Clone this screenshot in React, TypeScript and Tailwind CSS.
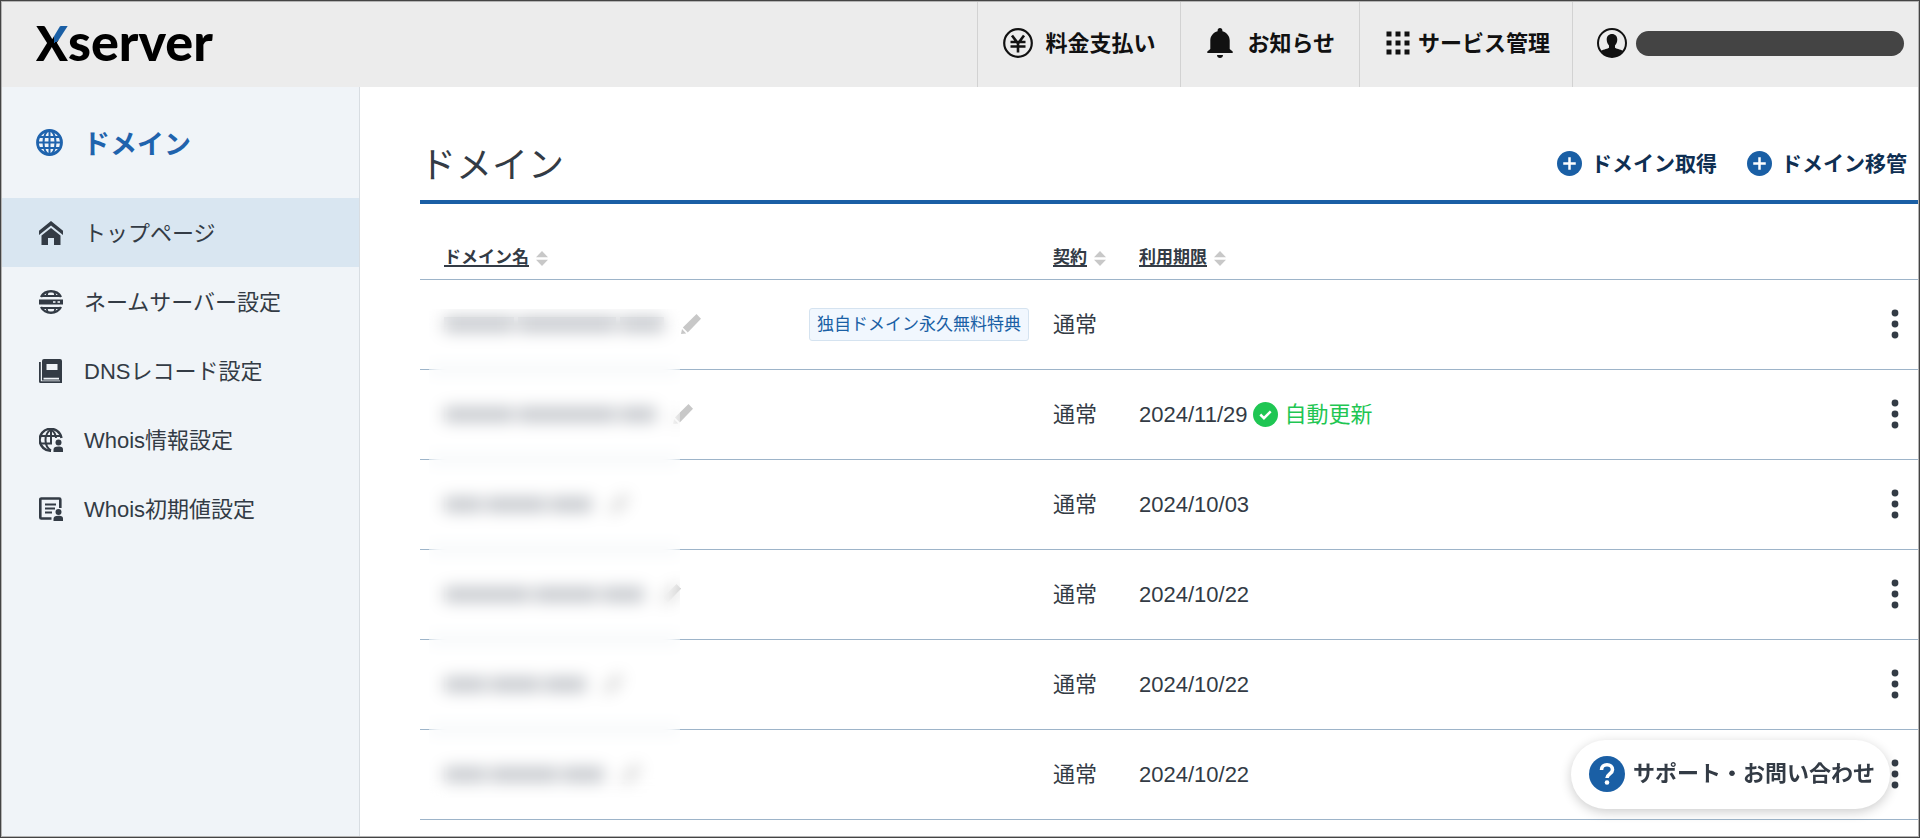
import type { ReactNode } from "react";

type Row = {
  words: string[];
  badge?: string;
  contract: string;
  expires?: string;
  autoRenew?: boolean;
};

const rows: Row[] = [
  { words: ["w-[70px]", "w-[98px]", "w-[44px]"], badge: "独自ドメイン永久無料特典", contract: "通常" },
  { words: ["w-[70px]", "w-[98px]", "w-[36px]"], contract: "通常", expires: "2024/11/29", autoRenew: true },
  { words: ["w-[38px]", "w-[60px]", "w-[42px]"], contract: "通常", expires: "2024/10/03" },
  { words: ["w-[86px]", "w-[64px]", "w-[42px]"], contract: "通常", expires: "2024/10/22" },
  { words: ["w-[42px]", "w-[50px]", "w-[42px]"], contract: "通常", expires: "2024/10/22" },
  { words: ["w-[42px]", "w-[68px]", "w-[42px]"], contract: "通常", expires: "2024/10/22" },
];

function YenIcon() {
  return (
    <svg viewBox="0 0 30 30" className="size-[30px] shrink-0" fill="none" stroke="#111" aria-hidden="true">
      <circle cx="15" cy="15" r="13.8" strokeWidth="2.2" />
      <path d="M9 7.5l6 8 6-8M15 15v9.5M7.5 14h15M7.5 18.5h15" strokeWidth="2.6" />
    </svg>
  );
}

function BellIcon() {
  return (
    <svg viewBox="0 0 30 30" className="size-[30px] shrink-0" fill="#111" aria-hidden="true">
      <path d="M15 0c1.5 0 2.4 1 2.4 2.4v.9c4.3 1.1 7.3 4.8 7.3 9.3v8.4l3 2.6V25H2.3v-1.4l3-2.6v-8.4c0-4.5 3-8.2 7.3-9.3v-.9C12.6 1 13.5 0 15 0z" />
      <path d="M12 27h6c0 1.8-1.3 3-3 3s-3-1.2-3-3z" />
    </svg>
  );
}

function GridIcon() {
  const steps = [0, 9, 18];
  return (
    <svg viewBox="0 0 24 24" className="size-[24px] shrink-0" fill="#111" aria-hidden="true">
      {steps.map((y) => steps.map((x) => <rect key={`${x}-${y}`} x={x + 0.5} y={y + 0.5} width="5" height="5" />))}
    </svg>
  );
}

function UserIcon() {
  return (
    <svg viewBox="0 0 30 30" className="size-[30px] shrink-0" aria-hidden="true">
      <circle cx="15" cy="15" r="14" fill="none" stroke="#111" strokeWidth="2" />
      <path
        fill="#111"
        d="M15 6c3.2 0 5.3 2.2 5.3 5.6 0 2.5-1 4.7-2.3 5.9v2.3c1 1 5 1.4 8 3.2A14 14 0 0 1 15 29 14 14 0 0 1 4 23c3-1.8 7-2.2 8-3.2v-2.3c-1.3-1.2-2.3-3.4-2.3-5.9C9.7 8.2 11.8 6 15 6z"
      />
    </svg>
  );
}

function GlobeIcon() {
  return (
    <svg viewBox="0 0 27 27" className="size-[27px] shrink-0" fill="none" stroke="#1f63ad" aria-hidden="true">
      <circle cx="13.5" cy="13.5" r="12" strokeWidth="2.8" />
      <ellipse cx="13.5" cy="13.5" rx="6" ry="12" strokeWidth="2" />
      <path d="M13.5 2v23M2 13.5h23M4 8h19M4 19h19" strokeWidth="2" />
    </svg>
  );
}

function HomeIcon() {
  return (
    <svg viewBox="0 0 24 24" className="size-[24px] shrink-0" fill="#333b45" aria-hidden="true">
      <path d="M12 0l12 9.800v4.200L12 4.400 0 14V9.800z" />
      <path d="M12 7l9.500 7.600V24H15v-7H9v7H2.500v-9.400z" />
    </svg>
  );
}

function NameServerIcon() {
  return (
    <svg viewBox="0 0 24 24" className="size-[24px] shrink-0" aria-hidden="true">
      <g fill="none" stroke="#333b45">
        <path d="M2 7C4 3.500 7.500 1.300 12 1.300s8 2.200 10 5.700M2 17c2 3.500 5.500 5.700 10 5.700s8-2.200 10-5.700" strokeWidth="2.400" />
        <path d="M2.500 6h19M2.500 18h19M9 1.500C8 3.500 7.700 5 7.500 7M15 1.500c1 2 1.300 3.500 1.500 5.500M9 22.500c-1-2-1.300-3.500-1.500-5.500M15 22.500c1-2 1.300-3.500 1.500-5.500" strokeWidth="1.800" />
      </g>
      <rect x="0" y="9.500" width="24" height="5" fill="#333b45" />
      <path d="M14 11h2.500v2H14zM18.500 11H21v2h-2.500z" fill="#c9ced4" />
    </svg>
  );
}

function BookIcon() {
  return (
    <svg viewBox="0 0 24 24" className="size-[24px] shrink-0" aria-hidden="true">
      <path fill="#333b45" d="M0 3h1.800v19.200H21V24H1.500A1.500 1.500 0 0 1 0 22.500z" />
      <path fill="#333b45" fillRule="evenodd" d="M5 0h16a2 2 0 0 1 2 2v22h-2v-2.500H3V2a2 2 0 0 1 2-2zm2.500 5v6h11V5zM4.500 18.800v1.600H20v-1.600z" />
    </svg>
  );
}

function WhoisIcon() {
  return (
    <svg viewBox="0 0 24 24" className="size-[24px] shrink-0" aria-hidden="true">
      <g fill="none" stroke="#333b45">
        <path d="M22.500 10A11 11 0 1 0 12 22.800" strokeWidth="2.400" />
        <path d="M12 1.500C8 4 6.500 7.500 6.500 12S8 20 12 22.500M12 1.500c3 2 4.600 5 5 8.500M2 8h20M1.500 15.500H13M12 1v14" strokeWidth="2" />
      </g>
      <circle cx="19.500" cy="14.500" r="3" fill="#333b45" />
      <path fill="#333b45" d="M14.500 24v-2.300c0-2 1.500-3.200 5-3.200s4.500 1.200 4.500 3.200V24z" />
    </svg>
  );
}

function WhoisDefaultIcon() {
  return (
    <svg viewBox="0 0 24 24" className="size-[24px] shrink-0" aria-hidden="true">
      <path d="M21.300 11V2.500a1 1 0 0 0-1-1H2.300a1 1 0 0 0-1 1v18a1 1 0 0 0 1 1H12.500" fill="none" stroke="#333b45" strokeWidth="2.600" />
      <path d="M6 7.500h11M6 11.500h10M6 15.500h7" stroke="#333b45" strokeWidth="1.800" />
      <circle cx="19.500" cy="15" r="3" fill="#333b45" />
      <path fill="#333b45" d="M14.500 24v-2.300c0-1.800 1.500-2.900 5-2.900s4.500 1.100 4.500 2.900V24z" />
    </svg>
  );
}

function PlusIcon() {
  return (
    <svg viewBox="0 0 24 24" className="size-[25px] shrink-0" aria-hidden="true">
      <circle cx="12" cy="12" r="12" fill="#1a5fa5" />
      <path d="M12 6v12M6 12h12" stroke="#fff" strokeWidth="2.4" />
    </svg>
  );
}

function PencilIcon() {
  return (
    <svg viewBox="0 0 20 20" className="size-[20px] shrink-0" fill="#c8c8c8" aria-hidden="true">
      <path d="M15.500 0L20 4.800 6.800 18.500 1.800 13.500z" />
      <path d="M1 15l4.200 4.400L0 20z" />
    </svg>
  );
}

function SortIcon() {
  return (
    <svg viewBox="0 0 12 15" className="h-[15px] w-[12px] shrink-0" fill="#c8c8c8" aria-hidden="true">
      <path d="M6 0l6 6.200H0zM6 15l6-6.200H0z" />
    </svg>
  );
}

function NavItem({ className, children }: { className: string; children: ReactNode }) {
  return (
    <a href="#" className={`flex items-center border-l border-[#d2d2d2] pb-[3px] text-[22px] font-bold whitespace-nowrap text-[#111] ${className}`}>
      {children}
    </a>
  );
}

function SortHeader({ label }: { label: string }) {
  return (
    <button type="button" className="flex items-center gap-[7px] text-[17px] leading-[24px] font-bold whitespace-nowrap">
      <span className="underline decoration-2 underline-offset-2">{label}</span>
      <SortIcon />
    </button>
  );
}

const menu = [
  { label: "トップページ", icon: <HomeIcon />, active: true },
  { label: "ネームサーバー設定", icon: <NameServerIcon />, active: false },
  { label: "DNSレコード設定", icon: <BookIcon />, active: false },
  { label: "Whois情報設定", icon: <WhoisIcon />, active: false },
  { label: "Whois初期値設定", icon: <WhoisDefaultIcon />, active: false },
];

export default function App() {
  return (
    <div className="flex min-h-screen flex-col bg-[#444] p-px font-['Liberation_Sans','Noto_Sans_CJK_JP',sans-serif] text-[#333b45]">
      <div className="flex grow flex-col border border-[#b4b4b4] bg-white">
        <header className="flex h-[85px] justify-between bg-[#ececec]">
          <a href="#" aria-label="Xserver" className="flex items-baseline pl-[34px] font-['Lato',sans-serif] leading-[78px] font-black text-black">
            <span className="bg-[conic-gradient(at_56%_50%,#1a5fa5_0_60deg,#000_60deg)] bg-clip-text text-[47px] text-transparent">X</span>
            <span className="text-[52px]">server</span>
          </a>
          <nav className="flex">
            <NavItem className="gap-3 pr-[25px] pl-[25px]">
              <YenIcon />
              料金支払い
            </NavItem>
            <NavItem className="gap-3 px-6">
              <BellIcon />
              お知らせ
            </NavItem>
            <NavItem className="gap-2 pr-[22px] pl-[26px]">
              <GridIcon />
              サービス管理
            </NavItem>
            <NavItem className="gap-[9px] pr-[14px] pl-6">
              <UserIcon />
              <span className="h-[25px] w-[268px] rounded-full bg-[#444]" />
            </NavItem>
          </nav>
        </header>

        <div className="flex grow">
          <aside className="w-[358px] shrink-0 border-r border-[#d8dde2] bg-[#f0f4f8]">
            <h2 className="flex h-[111px] items-center gap-[20px] pl-[34px] text-[27px] font-bold text-[#1f63ad]">
              <GlobeIcon />
              <span className="pt-[6px]">ドメイン</span>
            </h2>
            <nav>
              {menu.map((item) => (
                <a
                  key={item.label}
                  href="#"
                  className={`flex h-[69px] items-center gap-[21px] pt-px pl-[37px] text-[22px] ${item.active ? "bg-[#d9e6f1]" : ""}`}
                >
                  {item.icon}
                  {item.label}
                </a>
              ))}
            </nav>
          </aside>

          <main className="min-w-0 grow pl-[60px]">
            <div className="flex items-center justify-between border-b-4 border-[#1a5fa5] pt-[40px] pr-[11px]">
              <h1 className="pt-[4px] text-[36px] leading-[69px]">ドメイン</h1>
              <div className="flex gap-[30px] text-[21px] font-bold text-[#0f2f52]">
                <a href="#" className="flex items-center gap-[9px]">
                  <PlusIcon />
                  ドメイン取得
                </a>
                <a href="#" className="flex items-center gap-[9px]">
                  <PlusIcon />
                  ドメイン移管
                </a>
              </div>
            </div>

            <div className="relative">
              <table className="w-full table-fixed border-collapse text-left text-[22px]">
                <thead>
                  <tr className="h-[75px] border-b border-[#9db4c9]">
                    <th className="w-[633px] pt-[34px] pl-6">
                      <SortHeader label="ドメイン名" />
                    </th>
                    <th className="w-[86px] pt-[34px]">
                      <SortHeader label="契約" />
                    </th>
                    <th className="pt-[34px]">
                      <SortHeader label="利用期限" />
                    </th>
                    <th className="w-[48px]" aria-label="操作" />
                  </tr>
                </thead>
                <tbody>
                  {rows.map((row, i) => (
                    <tr key={i} className="h-[90px] border-b border-[#9db4c9]">
                      <td className="pr-6 pl-6">
                        <div className="flex items-center justify-between">
                          <div className="flex items-center gap-[17px]">
                            <span className="flex gap-[4px]">
                              {row.words.map((width, j) => (
                                <span key={j} className={`h-[15px] bg-[#c4c7cc] ${width}`} />
                              ))}
                            </span>
                            <button type="button" aria-label="編集">
                              <PencilIcon />
                            </button>
                          </div>
                          {row.badge && (
                            <span className="rounded-[3px] border border-[#d5e3f0] bg-[#f1f7fe] px-[7px] text-[17px] leading-[31px] whitespace-nowrap text-[#1a5fa5]">
                              {row.badge}
                            </span>
                          )}
                        </div>
                      </td>
                      <td>{row.contract}</td>
                      <td>
                        <div className="flex items-center gap-[6px]">
                          {row.expires}
                          {row.autoRenew && (
                            <span className="flex items-center gap-[6px] text-[#1fc653]">
                              <svg viewBox="0 0 24 24" className="size-[25px]" aria-hidden="true">
                                <circle cx="12" cy="12" r="12" fill="#1fc653" />
                                <path d="M7 12l3.500 3.500L17 9" fill="none" stroke="#fff" strokeWidth="2.4" />
                              </svg>
                              自動更新
                            </span>
                          )}
                        </div>
                      </td>
                      <td className="pr-[19px]">
                        <button type="button" aria-label="メニュー" className="ml-auto block">
                          <svg viewBox="0 0 8 30" className="h-[30px] w-[8px]" fill="#333b45" aria-hidden="true">
                            <circle cx="4" cy="4" r="3.4" />
                            <circle cx="4" cy="15" r="3.4" />
                            <circle cx="4" cy="26" r="3.4" />
                          </svg>
                        </button>
                      </td>
                    </tr>
                  ))}
                </tbody>
              </table>
              <div className="absolute top-[105px] bottom-[22px] left-[9px] w-[251px] backdrop-blur-[8px]" />
            </div>
          </main>
        </div>
      </div>

      <button
        type="button"
        className="fixed right-[30px] bottom-[29px] flex h-[69px] items-center gap-2 rounded-full bg-white pr-[15px] pb-[2px] pl-[18px] text-[22px] font-bold whitespace-nowrap shadow-[0_3px_12px_rgba(0,0,0,0.2)]"
      >
        <svg viewBox="0 0 36 36" className="size-[36px]" aria-hidden="true">
          <circle cx="18" cy="18" r="18" fill="#1a5fa5" />
          <path d="M12.500 14c0-3.300 2.300-5.200 5.500-5.200s5.500 1.900 5.500 4.900c0 4-5.500 4.300-5.500 8.300" fill="none" stroke="#fff" strokeWidth="3.6" />
          <circle cx="18" cy="26.500" r="2.300" fill="#fff" />
        </svg>
        サポート・お問い合わせ
      </button>
    </div>
  );
}
